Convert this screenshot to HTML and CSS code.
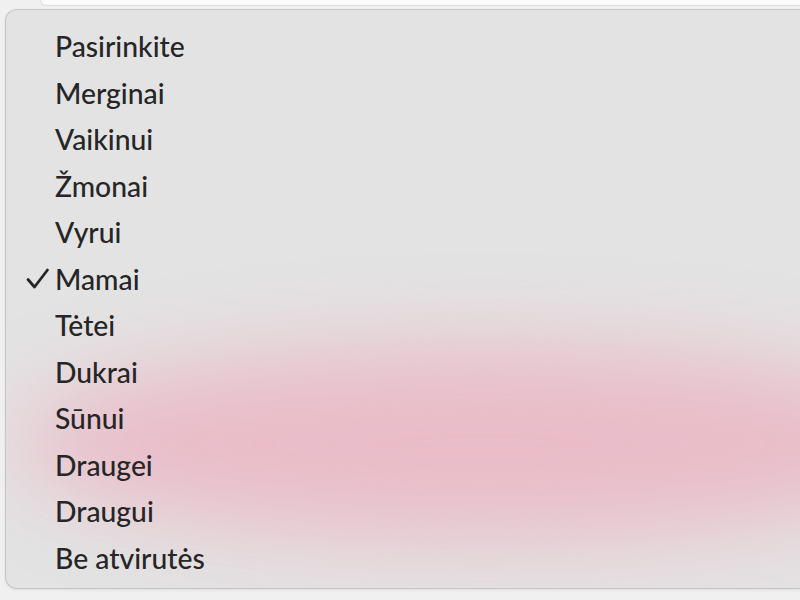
FILE: index.html
```html
<!DOCTYPE html>
<html lang="lt">
<head>
<meta charset="utf-8">
<link rel="stylesheet" href="styles.css">
</head>
<body>
<div class="field"></div>
<div class="menu">
  <div class="glow"></div>
  <ul class="list">
    <li class="item">Pasirinkite</li>
    <li class="item">Merginai</li>
    <li class="item">Vaikinui</li>
    <li class="item">Žmonai</li>
    <li class="item">Vyrui</li>
    <li class="item selected"><svg class="check" width="24" height="22" viewBox="0 0 24 22"><path d="M2 11.5 L8.5 19 L21.5 2" fill="none" stroke="#262626" stroke-width="2.8" stroke-linecap="round" stroke-linejoin="round"/></svg>Mamai</li>
    <li class="item">Tėtei</li>
    <li class="item">Dukrai</li>
    <li class="item">Sūnui</li>
    <li class="item">Draugei</li>
    <li class="item">Draugui</li>
    <li class="item">Be atvirutės</li>
  </ul>
</div>
</body>
</html>
```

FILE: styles.css
```css
html, body {
  margin: 0;
  padding: 0;
  height: 600px;
  overflow: hidden;
  background: #f0f0f0;
}
.field {
  margin-left: 40px;
  height: 5px;
  background: #fafafa;
  border: 1px solid #dcdcdc;
  border-top: none;
  border-right: none;
  border-bottom-left-radius: 10px;
}
.menu {
  position: relative;
  overflow: hidden;
  margin: 3px 0 0 5px;
  height: 578px;
  background: #e3e3e3;
  border: 1px solid #c6c6c6;
  border-right: none;
  border-radius: 12px 0 0 12px;
  box-shadow: 0 1px 3px rgba(0,0,0,0.08);
}
.glow {
  position: absolute;
  left: 10px;
  right: -150px;
  top: 335px;
  height: 195px;
  background: #ebb6c4;
  border-radius: 50%;
  filter: blur(42px);
  opacity: 0.85;
}
.list {
  position: relative;
  list-style: none;
  margin: 0;
  padding: 13px 0 0 0;
  font-family: Lato, "Noto Sans", sans-serif;
  font-size: 28.3px;
  font-weight: 500;
  color: #262626;
}
.item {
  position: relative;
  height: 46.5px;
  line-height: 46.5px;
  padding-left: 49px;
}
.check {
  position: absolute;
  left: 20px;
  top: 12px;
}
```
